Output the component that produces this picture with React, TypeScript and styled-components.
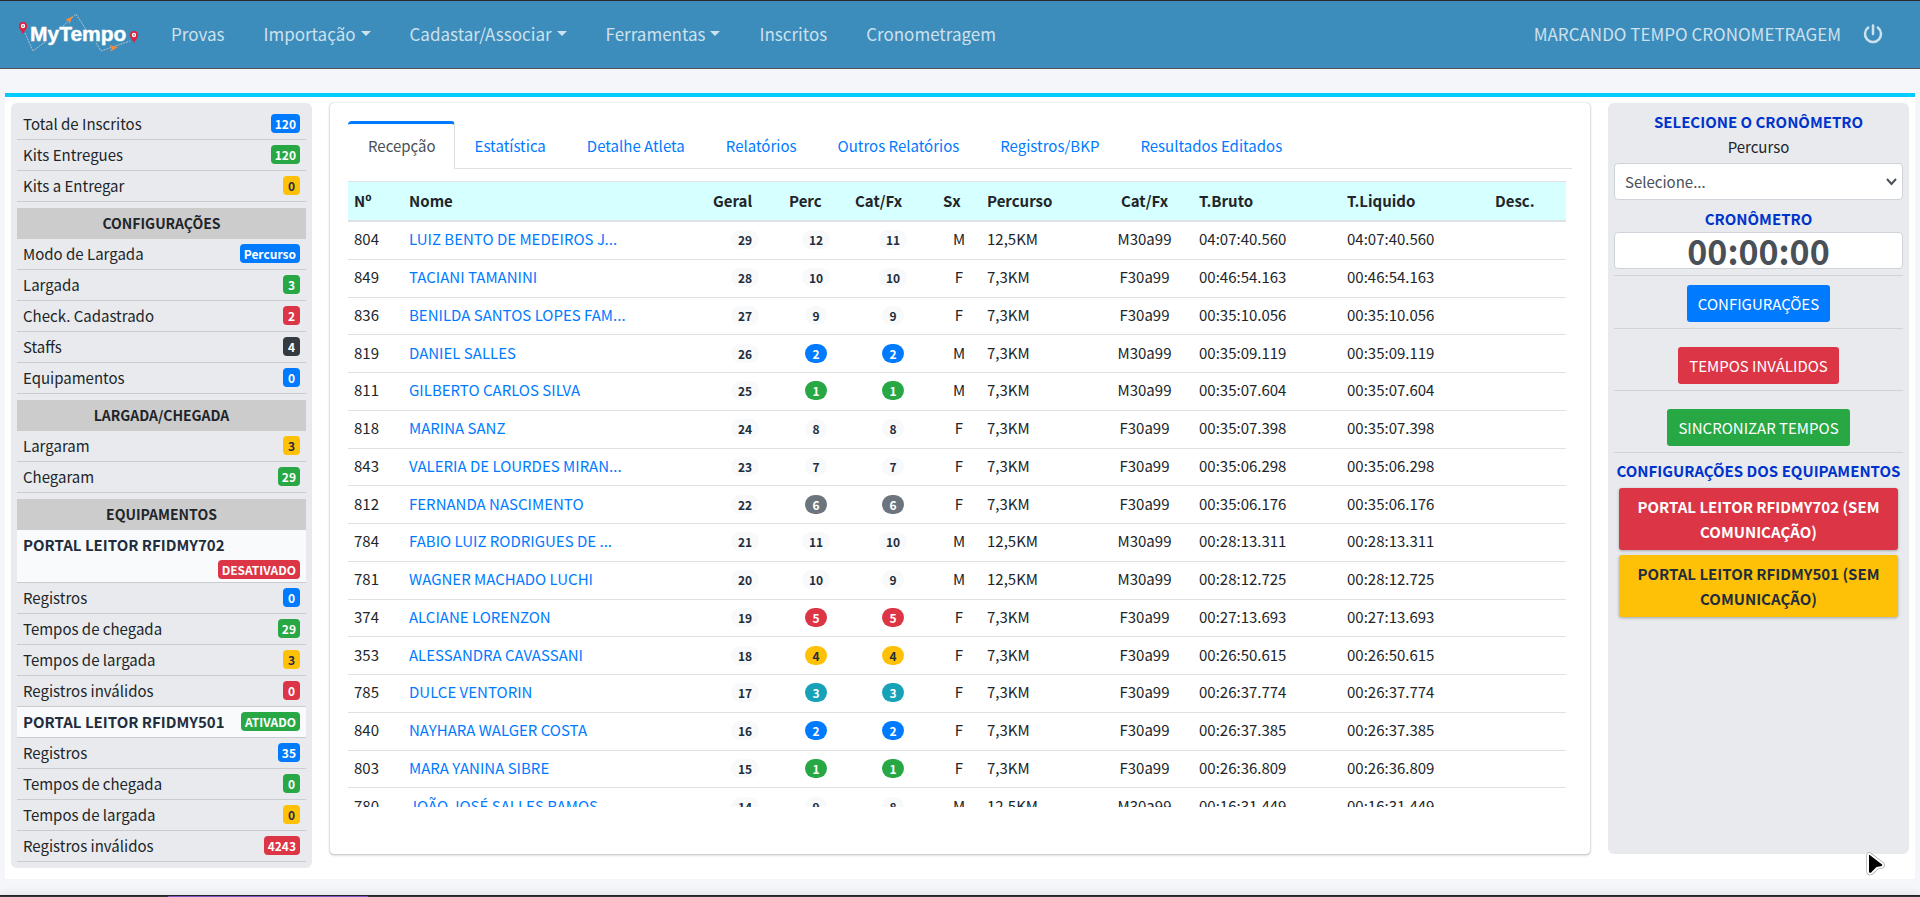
import React from "react";
import styled, { createGlobalStyle } from "styled-components";

const colors = {
  primary: "#007bff",
  success: "#28a745",
  warning: "#ffc107",
  danger: "#dc3545",
  info: "#17a2b8",
  secondary: "#6c757d",
  dark: "#343a40",
  light: "#f8f9fa",
};
type Tone = keyof typeof colors;

const inkOn = (tone: Tone) => (tone === "warning" || tone === "light" ? "#1f2d3d" : "#fff");

const GlobalStyle = createGlobalStyle`
  * { box-sizing: border-box; }
  body {
    margin: 0;
    background: #f4f6f9;
    color: #212529;
    font-family: "Noto Sans CJK JP", "Noto Sans", sans-serif;
    font-size: 15px;
    line-height: 25px;
  }
  button, input, select { font: inherit; }
  a { color: #007bff; text-decoration: none; }
`;

const Page = styled.div`
  display: flex;
  flex-direction: column;
  min-height: 100vh;
`;

const Navbar = styled.header`
  display: flex;
  align-items: center;
  height: 69px;
  padding: 0 37px 2px 18px;
  background: #3c8dbc;
  border-top: 1px solid #2a2a2e;
  border-bottom: 1px solid #4b545c;
`;

const Brand = styled.a`
  display: block;
  width: 122px;
  height: 42px;
  margin-right: 31px;
`;

const NavLinks = styled.nav`
  display: flex;
  flex: 1;
  gap: 39px;
`;

const NavLink = styled.a`
  display: flex;
  align-items: center;
  gap: 5px;
  color: rgba(255, 255, 255, 0.75);
  font-size: 17px;
  white-space: nowrap;
`;

const Caret = styled.span`
  border: 5px solid transparent;
  border-top-color: currentColor;
  border-bottom: 0;
`;

const UserArea = styled.div`
  display: flex;
  align-items: center;
  gap: 22px;
  color: rgba(255, 255, 255, 0.75);
  font-size: 17px;
`;

const PowerButton = styled.button`
  display: flex;
  padding: 0;
  border: 0;
  background: none;
  color: inherit;
`;

const Content = styled.main`
  display: grid;
  grid-template-columns: 43fr 180fr 43fr;
  align-items: start;
  gap: 18px;
  margin: 24px 5px 16px;
  padding: 6px 6px 11px;
  background: #fff;
  border-top: 4px solid #00ccff;
`;

const Panel = styled.aside`
  padding: 6px;
  background: #e8eaed;
  border-radius: 6px;
`;

const GroupTitle = styled.h2`
  margin: 6px 0 0;
  background: #ccc;
  font-size: 14px;
  font-weight: 700;
  line-height: 31px;
  text-align: center;
`;

const StatRow = styled.div<{ $device?: boolean }>`
  display: flex;
  flex-wrap: wrap;
  align-items: center;
  row-gap: 3px;
  min-height: 31px;
  padding: 2px 6px 3px;
  border-bottom: 1px solid #c9cbcf;
  ${(p) => p.$device && "background: #f8fafc; color: #1f2d3d; font-weight: 700;"}
`;

const Badge = styled.span<{ $tone: Tone; $pill?: boolean }>`
  display: inline-block;
  min-width: 17px;
  padding: 0 ${(p) => (p.$pill ? 7 : 4)}px;
  border-radius: ${(p) => (p.$pill ? 10 : 4)}px;
  background: ${(p) => colors[p.$tone]};
  color: ${(p) => inkOn(p.$tone)};
  font-size: 12px;
  font-weight: 700;
  line-height: 19px;
  text-align: center;
`;

const StatBadge = styled(Badge)`
  margin-left: auto;
`;

const Card = styled.section`
  min-width: 0;
  padding: 18px 18px 47px;
  border-radius: 4px;
  box-shadow: 0 0 1px rgba(0, 0, 0, 0.3), 0 1px 3px rgba(0, 0, 0, 0.25);
`;

const Tabs = styled.div`
  display: flex;
  gap: 1px;
  margin-bottom: 12px;
  border-bottom: 1px solid #dee2e6;
`;

const Tab = styled.button<{ $active?: boolean }>`
  height: 48px;
  margin-bottom: -1px;
  padding: ${(p) => (p.$active ? "0 18px 2px 20px" : "0 20px 2px 19px")};
  border: 0 solid #dee2e6;
  border-top: 3px solid ${(p) => (p.$active ? "#007bff" : "transparent")};
  border-right-width: 1px;
  border-right-color: ${(p) => (p.$active ? "#dee2e6" : "transparent")};
  border-radius: 4px 4px 0 0;
  background: ${(p) => (p.$active ? "#fff" : "transparent")};
  color: ${(p) => (p.$active ? "#495057" : "#007bff")};
  white-space: nowrap;
`;

const TableScroll = styled.div`
  max-height: 626px;
  padding-right: 6px;
  overflow-y: auto;
  scrollbar-width: none;
`;

const Table = styled.table`
  width: 100%;
  height: 645px;
  border-spacing: 0;
  table-layout: fixed;
`;

const Col = styled.col<{ $width: number }>`
  width: ${(p) => p.$width}px;
`;

const HeadCell = styled.th<{ $center?: boolean }>`
  height: 41px;
  padding: 0 6px 2px;
  background: #d6ffff;
  border-top: 1px solid #dee2e6;
  border-bottom: 2px solid #dee2e6;
  text-align: ${(p) => (p.$center ? "center" : "left")};
`;

const Cell = styled.td<{ $center?: boolean }>`
  padding: 4px 6px 7px;
  border-bottom: 1px solid #dee2e6;
  text-align: ${(p) => (p.$center ? "center" : "left")};
  white-space: nowrap;
`;

const ControlPanel = styled(Panel)`
  display: flex;
  flex-direction: column;
  min-height: 751px;
  text-align: center;
`;

const ControlTitle = styled.h2`
  margin: 0;
  color: #0033cc;
  font-size: 15px;
  font-weight: 700;
  white-space: nowrap;
`;

const TimerTitle = styled(ControlTitle)`
  padding: 6px 0 1px;
`;

const SelectBox = styled.div`
  position: relative;
  margin-top: 4px;

  svg {
    position: absolute;
    top: 15px;
    right: 6px;
    pointer-events: none;
  }
`;

const Select = styled.select`
  display: block;
  width: 100%;
  height: 37px;
  padding: 0 10px;
  border: 1px solid #ced4da;
  border-radius: 4px;
  background: #fff;
  color: #495057;
  appearance: none;
`;

const Timer = styled.input`
  display: block;
  width: 100%;
  height: 37px;
  padding: 0;
  border: 1px solid #ced4da;
  border-radius: 4px;
  background: #fff;
  color: #495057;
  font-size: 34px;
  font-weight: 700;
  line-height: 35px;
  text-align: center;
`;

const Action = styled.div<{ $gap: number }>`
  padding: ${(p) => p.$gap}px 0 6px;
  border-top: 1px solid #d0d3d8;
`;

const ActionList = styled.div`
  margin: 6px 0 5px;
  border-bottom: 1px solid #d0d3d8;
`;

const ActionButton = styled.button<{ $tone: Tone }>`
  height: 37px;
  padding: 0 11px;
  border: 0;
  border-radius: 3px;
  background: ${(p) => colors[p.$tone]};
  color: #fff;
  vertical-align: top;
`;

const DeviceButton = styled.button<{ $tone: Tone }>`
  margin: 0 5px 5px;
  padding: 6px;
  border: 0;
  border-radius: 3px;
  background: ${(p) => colors[p.$tone]};
  color: ${(p) => inkOn(p.$tone)};
  font-weight: 700;
  box-shadow: 0 1px 3px rgba(0, 0, 0, 0.3);
`;

const DeviceTitle = styled(ControlTitle)`
  margin-bottom: 5px;
`;

const BottomEdge = styled.footer`
  height: 2px;
  margin-top: auto;
  border-top: 1px solid #242424;
  background: linear-gradient(#7e57c2, #7e57c2) 168px 0 / 200px 1px no-repeat #333;
  box-shadow: 0 0 8px rgba(0, 0, 0, 0.25);
`;

const Pointer = styled.svg`
  position: fixed;
  right: 35px;
  bottom: 21px;
  pointer-events: none;
`;

const Logo = () => (
  <svg width="122" height="42" viewBox="0 0 122 42" role="img" aria-label="MyTempo">
    <g fill="none" stroke="#b9c3ca" strokeWidth="1" strokeDasharray="2 1">
      <path d="M7 20 L15 38 L27 29" />
      <path d="M45 13 L58 1 L69 18" />
      <path d="M78 30 L83 38 L112 28" />
    </g>
    <path d="M55 3 L47 7 L51 8 L51 12 Z" fill="#f58a3c" />
    <path d="M100 34 L91 32 L94 35 L92 39 Z" fill="#f58a3c" />
    <text
      x="12"
      y="28"
      fill="#fff"
      stroke="#fff"
      strokeWidth="0.4"
      fontFamily="Liberation Sans, sans-serif"
      fontWeight="700"
      fontSize="21"
    >
      MyTempo
    </text>
    {[
      [5, 14],
      [116, 23],
    ].map(([x, y]) => (
      <g key={x}>
        <path
          d={`M${x} ${y + 7} C${x - 2} ${y + 3} ${x - 4} ${y + 2} ${x - 4} ${y - 1} a4 4 0 0 1 8 0 C${x + 4} ${y + 2} ${x + 2} ${y + 3} ${x} ${y + 7}Z`}
          fill="#e0203c"
        />
        <circle cx={x} cy={y - 1} r="2.2" fill="#fff" />
        <circle cx={x} cy={y - 1} r="0.9" fill="#8a8f94" />
      </g>
    ))}
  </svg>
);

const PowerIcon = () => (
  <svg width="20" height="20" viewBox="0 0 20 20" fill="none" stroke="currentColor" strokeWidth="2.5" strokeLinecap="round">
    <path d="M5.2 3.6 a8 8 0 1 0 9.6 0" />
    <path d="M10 1.5 V10" />
  </svg>
);

type Stat = [string, string, Tone, boolean?];

const totals: Stat[] = [
  ["Total de Inscritos", "120", "primary"],
  ["Kits Entregues", "120", "success"],
  ["Kits a Entregar", "0", "warning"],
];

const groups: { title: string; stats: Stat[] }[] = [
  {
    title: "CONFIGURAÇÕES",
    stats: [
      ["Modo de Largada", "Percurso", "primary"],
      ["Largada", "3", "success"],
      ["Check. Cadastrado", "2", "danger"],
      ["Staffs", "4", "dark"],
      ["Equipamentos", "0", "primary"],
    ],
  },
  {
    title: "LARGADA/CHEGADA",
    stats: [
      ["Largaram", "3", "warning"],
      ["Chegaram", "29", "success"],
    ],
  },
  {
    title: "EQUIPAMENTOS",
    stats: [
      ["PORTAL LEITOR RFIDMY702", "DESATIVADO", "danger", true],
      ["Registros", "0", "primary"],
      ["Tempos de chegada", "29", "success"],
      ["Tempos de largada", "3", "warning"],
      ["Registros inválidos", "0", "danger"],
      ["PORTAL LEITOR RFIDMY501", "ATIVADO", "success", true],
      ["Registros", "35", "primary"],
      ["Tempos de chegada", "0", "success"],
      ["Tempos de largada", "0", "warning"],
      ["Registros inválidos", "4243", "danger"],
    ],
  },
];

const Stats = ({ items }: { items: Stat[] }) => (
  <>
    {items.map(([label, value, tone, device], i) => (
      <StatRow key={i} $device={device}>
        <span>{label}</span>
        <StatBadge $tone={tone}>{value}</StatBadge>
      </StatRow>
    ))}
  </>
);

const menu: [string, boolean][] = [
  ["Provas", false],
  ["Importação", true],
  ["Cadastar/Associar", true],
  ["Ferramentas", true],
  ["Inscritos", false],
  ["Cronometragem", false],
];

const tabs = [
  "Recepção",
  "Estatística",
  "Detalhe Atleta",
  "Relatórios",
  "Outros Relatórios",
  "Registros/BKP",
  "Resultados Editados",
];

const columns: [string, number][] = [
  ["Nº", 55],
  ["Nome", 304],
  ["Geral", 76],
  ["Perc", 66],
  ["Cat/Fx", 88],
  ["Sx", 44],
  ["Percurso", 115],
  ["Cat/Fx", 97],
  ["T.Bruto", 148],
  ["T.Liquido", 148],
  ["Desc.", 77],
];

const podium: Tone[] = ["success", "primary", "info", "warning", "danger", "secondary"];

type Result = [string, string, number, number, number, "M" | "F", string, string, boolean];

const results: Result[] = [
  ["804", "LUIZ BENTO DE MEDEIROS J...", 29, 12, 11, "M", "12,5KM", "04:07:40.560", false],
  ["849", "TACIANI TAMANINI", 28, 10, 10, "F", "7,3KM", "00:46:54.163", false],
  ["836", "BENILDA SANTOS LOPES FAM...", 27, 9, 9, "F", "7,3KM", "00:35:10.056", false],
  ["819", "DANIEL SALLES", 26, 2, 2, "M", "7,3KM", "00:35:09.119", true],
  ["811", "GILBERTO CARLOS SILVA", 25, 1, 1, "M", "7,3KM", "00:35:07.604", true],
  ["818", "MARINA SANZ", 24, 8, 8, "F", "7,3KM", "00:35:07.398", false],
  ["843", "VALERIA DE LOURDES MIRAN...", 23, 7, 7, "F", "7,3KM", "00:35:06.298", false],
  ["812", "FERNANDA NASCIMENTO", 22, 6, 6, "F", "7,3KM", "00:35:06.176", true],
  ["784", "FABIO LUIZ RODRIGUES DE ...", 21, 11, 10, "M", "12,5KM", "00:28:13.311", false],
  ["781", "WAGNER MACHADO LUCHI", 20, 10, 9, "M", "12,5KM", "00:28:12.725", false],
  ["374", "ALCIANE LORENZON", 19, 5, 5, "F", "7,3KM", "00:27:13.693", true],
  ["353", "ALESSANDRA CAVASSANI", 18, 4, 4, "F", "7,3KM", "00:26:50.615", true],
  ["785", "DULCE VENTORIN", 17, 3, 3, "F", "7,3KM", "00:26:37.774", true],
  ["840", "NAYHARA WALGER COSTA", 16, 2, 2, "F", "7,3KM", "00:26:37.385", true],
  ["803", "MARA YANINA SIBRE", 15, 1, 1, "F", "7,3KM", "00:26:36.809", true],
  ["780", "JOÃO JOSÉ SALLES RAMOS", 14, 9, 8, "M", "12,5KM", "00:16:31.449", false],
];

const Place = ({ n, ranked }: { n: number; ranked: boolean }) => (
  <Cell $center>
    <Badge $pill $tone={ranked ? podium[n - 1] : "light"}>
      {n}
    </Badge>
  </Cell>
);

export default function App() {
  return (
    <Page>
      <GlobalStyle />
      <Navbar>
        <Brand href="#">
          <Logo />
        </Brand>
        <NavLinks>
          {menu.map(([label, dropdown]) => (
            <NavLink key={label} href="#">
              {label}
              {dropdown && <Caret />}
            </NavLink>
          ))}
        </NavLinks>
        <UserArea>
          <span>MARCANDO TEMPO CRONOMETRAGEM</span>
          <PowerButton aria-label="Sair">
            <PowerIcon />
          </PowerButton>
        </UserArea>
      </Navbar>

      <Content>
        <Panel>
          <Stats items={totals} />
          {groups.map((g) => (
            <React.Fragment key={g.title}>
              <GroupTitle>{g.title}</GroupTitle>
              <Stats items={g.stats} />
            </React.Fragment>
          ))}
        </Panel>

        <Card>
          <Tabs role="tablist">
            {tabs.map((t, i) => (
              <Tab key={t} role="tab" aria-selected={i === 0} $active={i === 0}>
                {t}
              </Tab>
            ))}
          </Tabs>
          <TableScroll>
            <Table>
              <colgroup>
                {columns.map(([, width], i) => (
                  <Col key={i} $width={width} />
                ))}
              </colgroup>
              <thead>
                <tr>
                  {columns.map(([label], i) => (
                    <HeadCell key={i} $center={i === 7}>
                      {label}
                    </HeadCell>
                  ))}
                </tr>
              </thead>
              <tbody>
                {results.map(([num, name, overall, course, category, sex, distance, time, ranked]) => (
                  <tr key={num}>
                    <Cell>{num}</Cell>
                    <Cell>
                      <a href="#">{name}</a>
                    </Cell>
                    <Place n={overall} ranked={false} />
                    <Place n={course} ranked={ranked} />
                    <Place n={category} ranked={ranked} />
                    <Cell $center>{sex}</Cell>
                    <Cell>{distance}</Cell>
                    <Cell $center>{sex}30a99</Cell>
                    <Cell>{time}</Cell>
                    <Cell>{time}</Cell>
                    <Cell />
                  </tr>
                ))}
              </tbody>
            </Table>
          </TableScroll>
        </Card>

        <ControlPanel>
          <ControlTitle>SELECIONE O CRONÔMETRO</ControlTitle>
          <label htmlFor="percurso">Percurso</label>
          <SelectBox>
            <Select id="percurso">
              <option>Selecione...</option>
            </Select>
            <svg width="11" height="8" viewBox="0 0 11 8" fill="none" stroke="#495057" strokeWidth="2">
              <path d="M1 1 L5.5 6 L10 1" />
            </svg>
          </SelectBox>
          <TimerTitle as="label" htmlFor="timer">
            CRONÔMETRO
          </TimerTitle>
          <Timer id="timer" readOnly value="00:00:00" />
          <ActionList>
            <Action $gap={9}>
              <ActionButton $tone="primary">CONFIGURAÇÕES</ActionButton>
            </Action>
            <Action $gap={18}>
              <ActionButton $tone="danger">TEMPOS INVÁLIDOS</ActionButton>
            </Action>
            <Action $gap={18}>
              <ActionButton $tone="success">SINCRONIZAR TEMPOS</ActionButton>
            </Action>
          </ActionList>
          <DeviceTitle>CONFIGURAÇÕES DOS EQUIPAMENTOS</DeviceTitle>
          <DeviceButton $tone="danger">PORTAL LEITOR RFIDMY702 (SEM COMUNICAÇÃO)</DeviceButton>
          <DeviceButton $tone="warning">PORTAL LEITOR RFIDMY501 (SEM COMUNICAÇÃO)</DeviceButton>
        </ControlPanel>
      </Content>

      <BottomEdge />
      <Pointer width="19" height="24" viewBox="0 0 19 24">
        <path d="M2 3 Q2 1 4 2 L17 12 Q18 14 16 15 L11 16 L6 21 Q3 23 2 20 Z" fill="#000" stroke="#888" strokeWidth="3" />
        <path d="M2 3 Q2 1 4 2 L17 12 Q18 14 16 15 L11 16 L6 21 Q3 23 2 20 Z" fill="#000" stroke="#fff" strokeWidth="2" />
      </Pointer>
    </Page>
  );
}
